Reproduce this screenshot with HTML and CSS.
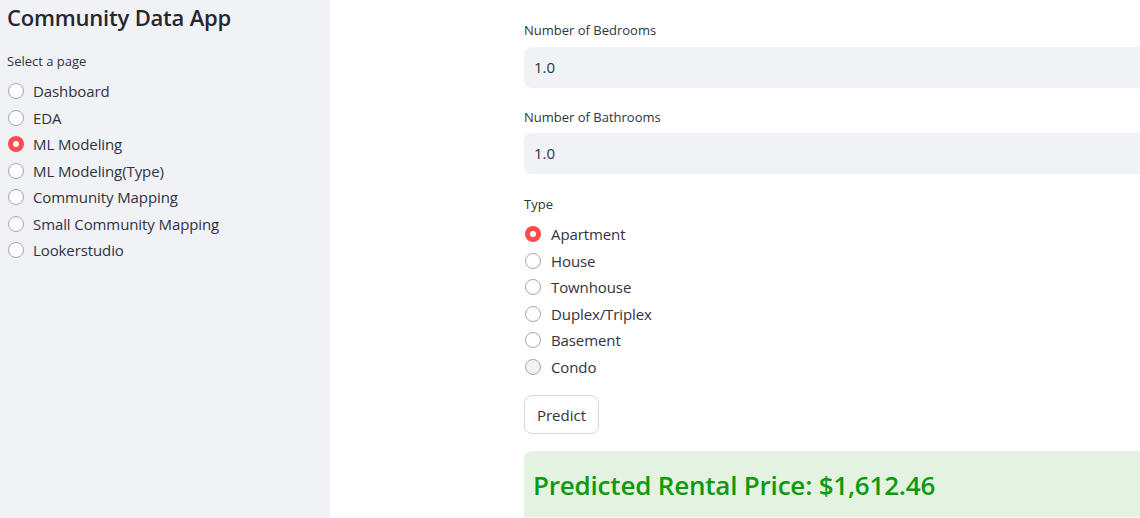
FILE: index.html
```html
<!DOCTYPE html>
<html>
<head>
<meta charset="utf-8">
<link rel="stylesheet" href="styles.css">
</head>
<body>
<div class="app">
  <aside class="sidebar">
    <h1 class="title">Community Data App</h1>
    <div class="group-label">Select a page</div>
    <div class="radios side">
      <div class="radio"><span class="dot"></span><span>Dashboard</span></div>
      <div class="radio"><span class="dot"></span><span>EDA</span></div>
      <div class="radio"><span class="dot on"></span><span>ML Modeling</span></div>
      <div class="radio"><span class="dot"></span><span>ML Modeling(Type)</span></div>
      <div class="radio"><span class="dot"></span><span>Community Mapping</span></div>
      <div class="radio"><span class="dot"></span><span>Small Community Mapping</span></div>
      <div class="radio"><span class="dot"></span><span>Lookerstudio</span></div>
    </div>
  </aside>
  <main class="main">
    <div class="field">
      <div class="label">Number of Bedrooms</div>
      <div class="input">1.0</div>
    </div>
    <div class="field second">
      <div class="label">Number of Bathrooms</div>
      <div class="input">1.0</div>
    </div>
    <div class="field third">
      <div class="label">Type</div>
      <div class="radios main-radios">
        <div class="radio"><span class="dot on"></span><span>Apartment</span></div>
        <div class="radio"><span class="dot"></span><span>House</span></div>
        <div class="radio"><span class="dot"></span><span>Townhouse</span></div>
        <div class="radio"><span class="dot"></span><span>Duplex/Triplex</span></div>
        <div class="radio"><span class="dot"></span><span>Basement</span></div>
        <div class="radio"><span class="dot hover"></span><span>Condo</span></div>
      </div>
    </div>
    <button class="btn">Predict</button>
    <div class="success">Predicted Rental Price: $1,612.46</div>
  </main>
</div>
</body>
</html>
```
FILE: styles.css
```css
html, body {
  margin: 0;
  padding: 0;
  width: 1140px;
  height: 518px;
  overflow: hidden;
  background: #ffffff;
}
body {
  font-family: "Open Sans", "Noto Sans", sans-serif;
  color: #31333f;
}
.app {
  display: flex;
  height: 518px;
}
.sidebar {
  width: 330px;
  flex: 0 0 330px;
  background: #f0f2f6;
  padding: 0 0 0 7px;
  box-sizing: border-box;
}
.title {
  margin: 2px 0 0 0;
  font-size: 22px;
  line-height: 30px;
  font-weight: 600;
  color: #262730;
  letter-spacing: -0.2px;
}
.group-label {
  margin-top: 19px;
  font-size: 13px;
  line-height: 20px;
  height: 20px;
}
.radios.side {
  margin-top: 7px;
}
.radio {
  display: flex;
  align-items: center;
  height: 26.5px;
  font-size: 15px;
  letter-spacing: -0.1px;
}
.dot {
  width: 16px;
  height: 16px;
  border-radius: 50%;
  border: 1px solid #a3a8b4;
  background: #ffffff;
  box-sizing: border-box;
  margin: 0 9px 0 1px;
  flex: 0 0 auto;
  position: relative;
}
.main-radios .dot {
  margin-right: 10px;
}
.dot.on {
  border: none;
  background: #ff4b4b;
}
.dot.on::after {
  content: "";
  position: absolute;
  left: 5px;
  top: 5px;
  width: 6px;
  height: 6px;
  border-radius: 50%;
  background: #ffffff;
}
.dot.hover {
  background: #f0f2f6;
}
.main {
  flex: 1 1 auto;
  padding: 20px 0 0 194px;
  min-width: 0;
}
.label {
  font-size: 13px;
  line-height: 20px;
  height: 20px;
}
.input {
  margin-top: 7px;
  height: 41px;
  box-sizing: border-box;
  background: #f0f2f6;
  border-radius: 8px 0 0 8px;
  padding-left: 10px;
  font-size: 15px;
  line-height: 41px;
}
.field.second {
  margin-top: 19px;
}
.field.second .input {
  margin-top: 6px;
}
.field.third {
  margin-top: 20px;
}
.main-radios {
  margin-top: 7px;
}
.btn {
  display: block;
  margin-top: 15px;
  height: 39px;
  width: 75px;
  border: 1px solid #d6d7dc;
  border-radius: 8px;
  background: #ffffff;
  font-family: "Open Sans", "Noto Sans", sans-serif;
  font-size: 15px;
  color: #31333f;
  padding: 0;
}
.success {
  margin-top: 17px;
  height: 66px;
  background: #e4f3e1;
  border-radius: 8px 0 0 0;
  color: #0d9a0d;
  font-size: 26px;
  font-weight: 600;
  padding: 17px 0 0 9px;
  box-sizing: border-box;
  line-height: 34px;
  letter-spacing: -0.2px;
}
```
